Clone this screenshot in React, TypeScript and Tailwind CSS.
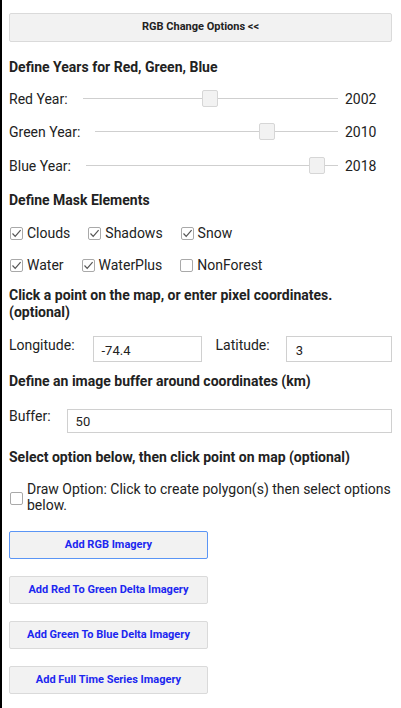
import React from "react";

const font = { fontFamily: "Roboto, 'Liberation Sans', Arial, sans-serif" };

function Slider({ label, value, min = 1984, max = 2020 }: { label: string; value: number; min?: number; max?: number }) {
  const frac = (value - min) / (max - min);
  return (
    <div className="flex items-center h-[20px]">
      <span className="text-[14px] text-[#222] whitespace-nowrap">{label}</span>
      <div className="relative flex-1 h-[20px] ml-[15px] mr-[7px]">
        <div className="absolute left-0 right-0 top-[9px] h-px bg-[#cfcfcf]" />
        <div className="absolute inset-y-0 left-0 right-[16px]">
          <div
            className="absolute top-[1px] w-[16px] h-[17px] rounded-[2px] bg-[#f2f2f2] border border-[#d6d6d6]"
            style={{ left: `${frac * 100}%` }}
          />
        </div>
      </div>
      <span className="text-[14px] text-[#222] w-[47px]">{value}</span>
    </div>
  );
}

function Check({ checked, label }: { checked: boolean; label: string }) {
  return (
    <div className="flex items-center">
      <span className="w-[13px] h-[13px] border border-[#a9a9a9] rounded-[2px] bg-white flex items-center justify-center mr-[4px]">
        {checked && (
          <svg width="11" height="11" viewBox="0 0 11 11">
            <path d="M1.5 5.5 L4.2 8.3 L9.6 2.2" fill="none" stroke="#555" strokeWidth="1.2" />
          </svg>
        )}
      </span>
      <span className="text-[14px] text-[#222]">{label}</span>
    </div>
  );
}

function Btn({ children, focused = false }: { children: React.ReactNode; focused?: boolean }) {
  return (
    <button
      className={`w-[199px] h-[28px] rounded-[2px] bg-[#f2f2f2] text-[11px] font-bold text-[#1c27f0] ${
        focused ? "border border-[#5b95f5]" : "border border-[#dadada]"
      }`}
    >
      {children}
    </button>
  );
}

export default function App() {
  return (
    <div style={font} className="w-[401px] h-[708px] bg-white border-l-2 border-black pl-[7px] pr-[9px] overflow-hidden">
      <button className="mt-[13px] w-full h-[29px] rounded-[2px] bg-[#f2f2f2] border border-[#dadada] text-[11px] font-bold text-[#222]">
        RGB Change Options &lt;&lt;
      </button>

      <div className="mt-[17px] text-[14px] font-bold text-[#222] leading-[16px]">Define Years for Red, Green, Blue</div>

      <div className="mt-[14px]">
        <Slider label="Red Year:" value={2002} />
      </div>
      <div className="mt-[13px]">
        <Slider label="Green Year:" value={2010} />
      </div>
      <div className="mt-[14px]">
        <Slider label="Blue Year:" value={2018} />
      </div>

      <div className="mt-[16px] text-[14px] font-bold text-[#222] leading-[16px]">Define Mask Elements</div>

      <div className="mt-[15px] flex items-center gap-[18px] h-[20px] pl-[1px]">
        <Check checked label="Clouds" />
        <Check checked label="Shadows" />
        <Check checked label="Snow" />
      </div>
      <div className="mt-[12px] flex items-center gap-[18px] h-[20px] pl-[1px]">
        <Check checked label="Water" />
        <Check checked label="WaterPlus" />
        <Check checked={false} label="NonForest" />
      </div>

      <div className="mt-[12px] text-[14px] font-bold text-[#222] leading-[17px]">
        Click a point on the map, or enter pixel coordinates.
        <br />
        (optional)
      </div>

      <div className="mt-[15px] flex items-start">
        <span className="text-[14px] text-[#222] leading-[16px] mt-[1px]">Longitude:</span>
        <div className="ml-[18px] w-[109px] h-[26px] border border-[#d0d0d0] flex items-center pl-[8px] pt-[3px] text-[13px] text-[#222]">-74.4</div>
        <span className="ml-[14px] text-[14px] text-[#222] leading-[16px] mt-[1px]">Latitude:</span>
        <div className="ml-[16px] flex-1 h-[26px] border border-[#d0d0d0] flex items-center pl-[9px] pt-[3px] text-[13px] text-[#222]">3</div>
      </div>

      <div className="mt-[11px] text-[14px] font-bold text-[#222] leading-[16px]">Define an image buffer around coordinates (km)</div>

      <div className="mt-[20px] flex items-start">
        <span className="text-[14px] text-[#222] leading-[16px] mt-[-1px]">Buffer:</span>
        <div className="ml-[16px] flex-1 h-[24px] border border-[#d0d0d0] flex items-center pl-[8px] pt-[2px] text-[13px] text-[#222]">50</div>
      </div>

      <div className="mt-[16px] text-[14px] font-bold text-[#222] leading-[16px]">Select option below, then click point on map (optional)</div>

      <div className="mt-[16px] flex items-start pl-[1px]">
        <span className="mt-[11px] w-[13px] h-[13px] border border-[#a9a9a9] rounded-[2px] bg-white shrink-0" />
        <span className="ml-[4px] text-[14px] text-[#222] leading-[16px]">
          Draw Option: Click to create polygon(s) then select options below.
        </span>
      </div>

      <div className="mt-[18px] flex flex-col gap-[17px]">
        <Btn focused>Add RGB Imagery</Btn>
        <Btn>Add Red To Green Delta Imagery</Btn>
        <Btn>Add Green To Blue Delta Imagery</Btn>
        <Btn>Add Full Time Series Imagery</Btn>
      </div>
    </div>
  );
}
